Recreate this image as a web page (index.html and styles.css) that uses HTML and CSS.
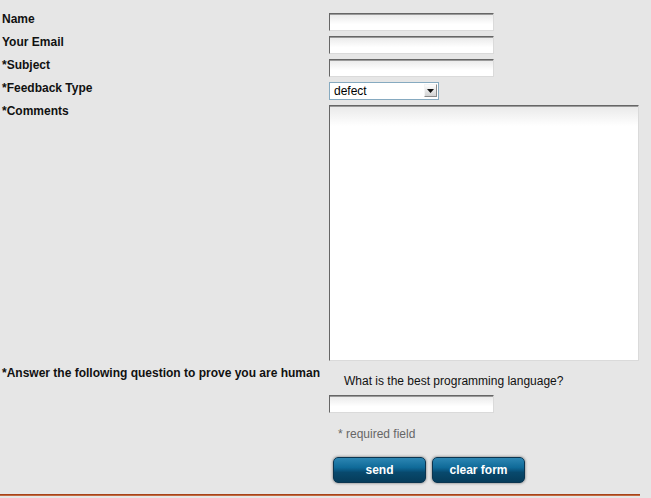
FILE: index.html
```html
<!DOCTYPE html>
<html lang="en">

<head>
  <title>Feedback</title>
  <link rel="stylesheet" href="styles.css">
</head>

<body>
  <form class="feedback">
    <div class="row">
      <label class="lbl" for="name">Name</label>
      <input class="field" type="text" id="name">
    </div>
    <div class="row">
      <label class="lbl" for="email">Your Email</label>
      <input class="field" type="text" id="email">
    </div>
    <div class="row">
      <label class="lbl" for="subject">*Subject</label>
      <input class="field" type="text" id="subject">
    </div>
    <div class="row">
      <label class="lbl" for="type">*Feedback Type</label>
      <div class="select-wrap">
        <select class="pick" id="type">
          <option>defect</option>
          <option>suggestion</option>
          <option>other</option>
        </select>
        <span class="arrow"><svg width="7" height="4" viewBox="0 0 7 4"><path d="M0 0h7L3.5 4z" fill="#111"/></svg></span>
      </div>
    </div>
    <div class="row">
      <label class="lbl" for="comments">*Comments</label>
      <textarea class="comments" id="comments"></textarea>
    </div>
    <div class="row captcha">
      <label class="lbl" for="answer">*Answer the following question to prove you are human</label>
      <div class="col">
        <div class="question">What is the best programming language?</div>
        <input class="field" type="text" id="answer">
        <div class="note">* required field</div>
        <div class="buttons">
          <button type="button" class="btn">send</button>
          <button type="reset" class="btn">clear form</button>
        </div>
      </div>
    </div>
  </form>
  <div class="rule"></div>
</body>

</html>
```

FILE: styles.css
```css
body {
  margin: 0;
  background-color: #e6e6e6;
  font-family: "Liberation Sans", Arial, sans-serif;
  font-size: 12px;
  color: #111;
}

.feedback {
  padding: 13px 0 0 2px;
  margin: 0;
}

.row {
  display: flex;
  margin-bottom: 5px;
}

.lbl {
  width: 327px;
  flex-shrink: 0;
  font-weight: bold;
  line-height: 14px;
  margin-top: -1px;
}

.field {
  box-sizing: border-box;
  width: 165px;
  height: 18px;
  margin: 0;
  padding: 1px 3px;
  border: 1px solid;
  border-color: #666 #dadada #dadada #666;
  box-shadow: inset 0 1px 0 #9a9a9a;
  background: linear-gradient(#e9e9e9, #fff 65%);
  font-family: inherit;
  font-size: 12px;
}

.select-wrap {
  position: relative;
  width: 110px;
  height: 18px;
}

.pick {
  appearance: none;
  box-sizing: border-box;
  width: 110px;
  height: 18px;
  margin: 0;
  padding: 0 0 0 4px;
  border: 1px solid #86aac0;
  border-radius: 0;
  background: #fff;
  font-family: "Liberation Sans", Arial, sans-serif;
  font-size: 12px;
  color: #000;
}

.arrow {
  position: absolute;
  top: 2px;
  right: 2px;
  width: 13px;
  height: 13px;
  box-sizing: border-box;
  border: 1px solid;
  border-color: #f4f4f4 #8a8a8a #8a8a8a #f4f4f4;
  background: linear-gradient(#fdfdfd, #d2d2d2);
  display: flex;
  align-items: center;
  justify-content: center;
  pointer-events: none;
}

.comments {
  box-sizing: border-box;
  width: 310px;
  height: 256px;
  margin: 0;
  border: 1px solid;
  border-color: #666 #dadada #dadada #666;
  box-shadow: inset 0 1px 0 #9a9a9a;
  background: linear-gradient(#e9e9e9, #fff 20px);
  resize: none;
}

.captcha .lbl {
  margin-top: 0;
}

.col {
  display: flex;
  flex-direction: column;
}

.question {
  font-size: 12px;
  line-height: 15px;
  padding: 8px 0 0 15px;
  margin-bottom: 6px;
}

.note {
  color: #666;
  line-height: 14px;
  padding-left: 9px;
  margin-top: 14px;
}

.buttons {
  display: flex;
  gap: 6px;
  margin: 16px 0 0 4px;
}

.btn {
  width: 93px;
  height: 26px;
  padding: 0;
  border: 1px solid #0b3550;
  border-radius: 5px;
  background: linear-gradient(#2c86b3 0%, #0f6a98 40%, #0a5680 52%, #08496d 60%, #063c5a 100%);
  box-shadow: 0 0 3px rgba(0, 0, 0, 0.55);
  color: #fff;
  font-family: "Liberation Sans", Arial, sans-serif;
  font-weight: bold;
  font-size: 12px;
}

.rule {
  width: 640px;
  height: 1px;
  margin-top: 11px;
  border-top: 1px solid #a8421a;
  background: #c06a40;
}
```
